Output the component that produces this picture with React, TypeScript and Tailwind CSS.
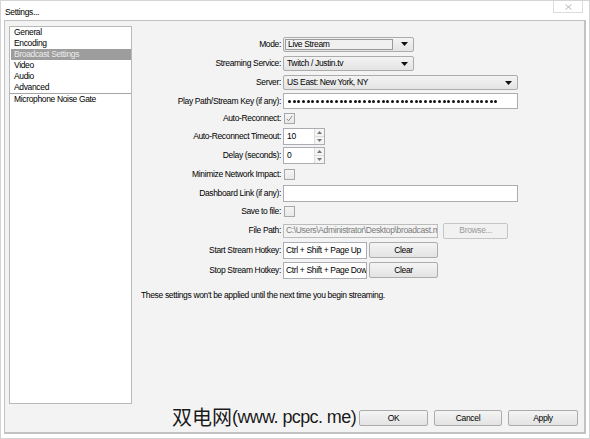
import React from "react";

const SIDE_ITEMS = ["General", "Encoding", "Broadcast Settings", "Video", "Audio", "Advanced"];

function Arrow() {
  return (
    <svg width="7" height="4" viewBox="0 0 7 4" className="shrink-0">
      <path d="M0 0h7L3.5 4z" fill="#111" />
    </svg>
  );
}

function Combo({ value, width, focused }: { value: string; width: string; focused?: boolean }) {
  return (
    <div
      className={`${width} flex h-[15px] items-center rounded-[2px] border border-[#acacac] bg-gradient-to-b from-[#f3f3f3] to-[#e4e4e4] pr-[5px]`}
    >
      {focused ? (
        <div className="ml-[1px] mr-[8px] flex h-[11px] flex-1 items-center border border-[#9a9a9a] bg-[#f1f1f1] pl-[2px]">
          {value}
        </div>
      ) : (
        <div className="flex-1 pl-[3px]">{value}</div>
      )}
      <Arrow />
    </div>
  );
}

function Check({ checked }: { checked?: boolean }) {
  return (
    <div className="flex h-[11px] w-[11px] items-center justify-center border border-[#a8a8a8] bg-gradient-to-b from-[#f4f4f4] to-[#e9e9e9]">
      {checked ? (
        <svg width="7" height="7" viewBox="0 0 7 7">
          <path d="M0.8 3.8L2.6 5.8L6.2 0.8" stroke="#8a8a8a" strokeWidth="1" fill="none" />
        </svg>
      ) : null}
    </div>
  );
}

function Spin({ value }: { value: string }) {
  return (
    <div className="flex h-[17px] w-[42px] border border-[#abadb3] bg-white">
      <div className="flex flex-1 items-center pl-[3px]">{value}</div>
      <div className="flex w-[10px] flex-col border-l border-[#dcdcdc]">
        <div className="flex flex-1 items-center justify-center border-b border-[#dcdcdc] bg-[#f4f4f4]">
          <svg width="5" height="3" viewBox="0 0 5 3">
            <path d="M0 3h5L2.5 0z" fill="#777" />
          </svg>
        </div>
        <div className="flex flex-1 items-center justify-center bg-[#f4f4f4]">
          <svg width="5" height="3" viewBox="0 0 5 3">
            <path d="M0 0h5L2.5 3z" fill="#777" />
          </svg>
        </div>
      </div>
    </div>
  );
}

function Btn({ label, width, disabled }: { label: string; width: string; disabled?: boolean }) {
  return (
    <div
      className={`${width} flex h-[16px] items-center justify-center rounded-[2px] border ${
        disabled
          ? "border-[#c5c5c5] bg-[#f1f1f1] text-[#9b9b9b]"
          : "border-[#acacac] bg-gradient-to-b from-[#f4f4f4] to-[#e3e3e3] text-black"
      }`}
    >
      {label}
    </div>
  );
}

function Row({ label, h, children }: { label: string; h: string; children: React.ReactNode }) {
  return (
    <div className={`${h} flex items-center gap-[2px]`}>
      <div className="w-[149px] text-right">{label}</div>
      {children}
    </div>
  );
}

export default function App() {
  const dots = Array.from({ length: 45 });
  return (
    <div className="relative h-[439px] w-[590px] border border-[#d4d4d4] bg-white font-['Liberation_Sans',sans-serif] text-[8.5px] leading-none tracking-[-0.35px] text-black">
      <div className="flex h-[19px] items-start justify-between">
        <div className="pl-[4px] pt-[7px]">Settings...</div>
        <div className="mr-[6px] flex h-[12px] w-[30px] items-center justify-center border border-t-0 border-[#dcdcdc] bg-white">
          <svg width="7" height="6" viewBox="0 0 7 6">
            <path d="M0.5 0.5l6 5M6.5 0.5l-6 5" stroke="#b5b5b5" strokeWidth="1" />
          </svg>
        </div>
      </div>

      <div className="mx-[3px] flex h-[414px] flex-col border border-b-2 border-r-2 border-[#c2c2c2] bg-[#f3f3f3]">
        <div className="flex h-[383px] pt-[5px]">
          <div className="ml-[4px] h-[378px] w-[123px] border border-[#b9b9b9] bg-white">
            {SIDE_ITEMS.map((item) =>
              item === "Broadcast Settings" ? (
                <div key={item} className="ml-[1px] flex h-[11px] items-center bg-[#9d9d9d] pl-[3px] text-[#ececec]">
                  {item}
                </div>
              ) : (
                <div key={item} className="flex h-[11px] items-center pl-[4px]">
                  {item}
                </div>
              )
            )}
            <div className="h-px bg-[#a5a5a5]" />
            <div className="flex h-[11px] items-center pl-[4px]">Microphone Noise Gate</div>
          </div>

          <div className="flex flex-1 flex-col pt-[8px]">
            <Row label="Mode:" h="h-[20px]">
              <Combo value="Live Stream" width="w-[131px]" focused />
            </Row>
            <Row label="Streaming Service:" h="h-[19px]">
              <Combo value="Twitch / Justin.tv" width="w-[131px]" />
            </Row>
            <Row label="Server:" h="h-[19px]">
              <Combo value="US East: New York, NY" width="w-[235px]" />
            </Row>
            <Row label="Play Path/Stream Key (if any):" h="h-[18px]">
              <div className="flex h-[16px] w-[235px] items-center gap-[1.7px] overflow-hidden border border-[#abadb3] bg-white pl-[4px]">
                {dots.map((_, i) => (
                  <span key={i} className="h-[3px] w-[3px] shrink-0 rounded-full bg-[#111]" />
                ))}
              </div>
            </Row>
            <Row label="Auto-Reconnect:" h="h-[17px]">
              <div className="pl-[1px]">
                <Check checked />
              </div>
            </Row>
            <Row label="Auto-Reconnect Timeout:" h="h-[19px]">
              <Spin value="10" />
            </Row>
            <Row label="Delay (seconds):" h="h-[19px]">
              <Spin value="0" />
            </Row>
            <Row label="Minimize Network Impact:" h="h-[19px]">
              <div className="pl-[1px]">
                <Check />
              </div>
            </Row>
            <Row label="Dashboard Link (if any):" h="h-[18px]">
              <div className="h-[17px] w-[235px] border border-[#abadb3] bg-white" />
            </Row>
            <Row label="Save to file:" h="h-[19px]">
              <div className="pl-[1px]">
                <Check />
              </div>
            </Row>
            <Row label="File Path:" h="h-[19px]">
              <div className="flex h-[14px] w-[155px] items-center overflow-hidden whitespace-nowrap border border-[#bcbcbc] bg-[#f3f3f3] pl-[2px] text-[#7b7b7b]">
                C:\Users\Administrator\Desktop\broadcast.mp4
              </div>
              <div className="ml-[3px]">
                <Btn label="Browse..." width="w-[65px]" disabled />
              </div>
            </Row>
            <Row label="Start Stream Hotkey:" h="h-[20px]">
              <div className="flex h-[17px] w-[84px] items-center overflow-hidden whitespace-nowrap border border-[#abadb3] bg-white pl-[2px]">
                Ctrl + Shift + Page Up
              </div>
              <Btn label="Clear" width="w-[69px]" />
            </Row>
            <Row label="Stop Stream Hotkey:" h="h-[20px]">
              <div className="flex h-[17px] w-[84px] items-center overflow-hidden whitespace-nowrap border border-[#abadb3] bg-white pl-[2px]">
                Ctrl + Shift + Page Down
              </div>
              <Btn label="Clear" width="w-[69px]" />
            </Row>
            <div className="mt-[11px] pl-[9px]">These settings won't be applied until the next time you begin streaming.</div>
          </div>
        </div>

        <div className="mt-[6px] flex justify-end gap-[6px] pr-[6px]">
          <Btn label="OK" width="w-[69px]" />
          <Btn label="Cancel" width="w-[68px]" />
          <Btn label="Apply" width="w-[70px]" />
        </div>
      </div>

      <div className="absolute left-[171px] top-[404px] flex items-center whitespace-nowrap leading-[24px] text-[#1a1a1a] [text-shadow:0_0_2px_#fff]">
        <span className="font-['Noto_Sans_CJK_SC',sans-serif] text-[20px] tracking-normal">双电网</span>
        <span className="font-['Liberation_Sans',sans-serif] text-[18px] tracking-[-0.6px]">(www. pcpc. me)</span>
      </div>
    </div>
  );
}
